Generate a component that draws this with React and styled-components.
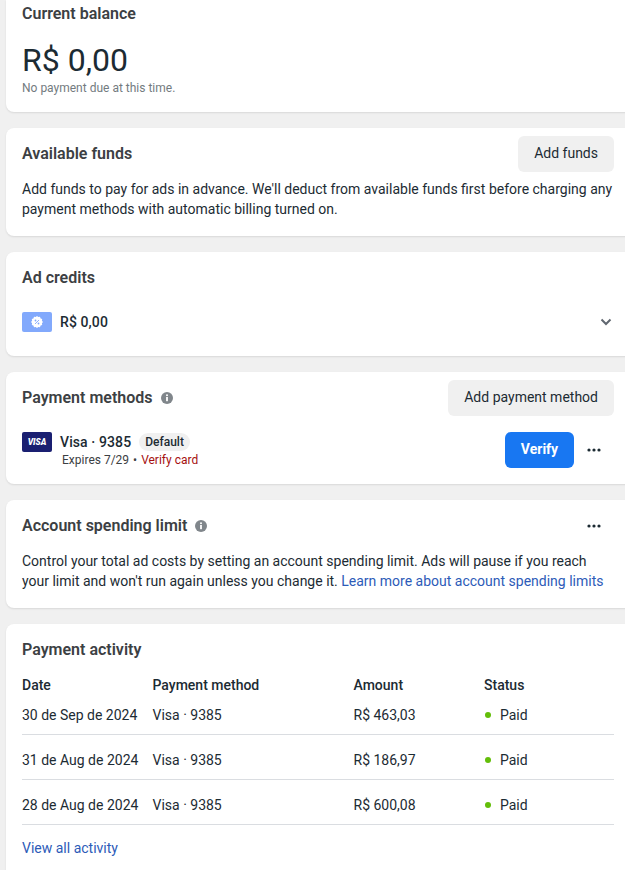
import React from "react";
import styled, { createGlobalStyle } from "styled-components";

const GlobalStyle = createGlobalStyle`
  html, body {
    margin: 0;
    padding: 0;
    background: #f0f0f0;
    overflow: hidden;
  }
  body {
    font-family: Roboto, "Liberation Sans", sans-serif;
    color: #1c2b33;
  }
`;

const Page = styled.div`
  width: 625px;
  height: 870px;
  overflow: hidden;
  padding-left: 6px;
  box-sizing: border-box;
  display: flex;
  flex-direction: column;
  gap: 16px;
`;

const Card = styled.section`
  background: #fff;
  border-radius: ${(p) => (p.$flushTop ? "0 0 8px 8px" : "8px")};
  box-shadow: 0 1px 2px rgba(0, 0, 0, 0.1);
  box-sizing: border-box;
  flex: none;
  height: ${(p) => p.$height}px;
  margin-right: -12px;
  padding: ${(p) => p.$pad || "8px"} 23px 0 16px;
`;

const HeaderRow = styled.div`
  display: flex;
  align-items: center;
  justify-content: space-between;
  min-height: 36px;
`;

const TitleGroup = styled.div`
  display: flex;
  align-items: center;
  gap: 8px;
`;

const Title = styled.h2`
  margin: 0;
  font-size: 16px;
  line-height: 20px;
  font-weight: 600;
  color: #3c4043;
`;

const GreyButton = styled.button`
  height: 36px;
  padding: 0 16px 2px;
  border: 0;
  border-radius: 6px;
  background: #f0f0f0;
  color: #1c2b33;
  font: 400 14px/20px Roboto, sans-serif;
`;

const BlueButton = styled.button`
  height: 36px;
  width: 69px;
  padding: 0 0 2px;
  border: 0;
  border-radius: 6px;
  background: #1877f2;
  color: #fff;
  font: 700 14px/20px Roboto, sans-serif;
`;

const BigAmount = styled.div`
  margin-top: 17px;
  font-size: 32px;
  line-height: 38px;
  font-weight: 400;
  color: #1c2b33;
`;

const Hint = styled.div`
  margin-top: 1px;
  font-size: 12px;
  line-height: 16px;
  color: #737b80;
`;

const Body = styled.p`
  margin: 7px 0 0;
  font-size: 14px;
  line-height: 20px;
  color: #1c2b33;
`;

const Link = styled.a`
  color: #2d5bb8;
  text-decoration: none;
  font-size: 14px;
  line-height: 20px;
`;

const CreditRow = styled.div`
  display: flex;
  align-items: center;
  gap: 8px;
  margin-top: 24px;
`;

const CreditBadge = styled.div`
  width: 30px;
  height: 20px;
  border-radius: 2px;
  background: #82a9fc;
  display: flex;
  align-items: center;
  justify-content: center;
`;

const Strong = styled.span`
  font-size: 14px;
  line-height: 20px;
  font-weight: 500;
  color: #1c2b33;
  letter-spacing: 0.1px;
`;

const Chevron = styled.div`
  margin-left: auto;
  margin-right: 2px;
  display: flex;
`;

const MethodRow = styled.div`
  display: flex;
  align-items: center;
  margin-top: 16px;
`;

const VisaBadge = styled.div`
  width: 30px;
  height: 20px;
  border-radius: 2px;
  background: #1a1f71;
  color: #fff;
  font: italic 900 8.5px/20px Roboto, sans-serif;
  text-align: center;
  align-self: flex-start;
  margin-right: 8px;
`;

const MethodText = styled.div`
  display: flex;
  flex-direction: column;
`;

const MethodTop = styled.div`
  display: flex;
  align-items: center;
  gap: 8px;
  height: 18px;
`;

const DefaultPill = styled.span`
  padding: 0 6px;
  height: 18px;
  border-radius: 9px;
  background: #f0f0f0;
  font-size: 12px;
  line-height: 18px;
  font-weight: 500;
  color: #1c2b33;
`;

const MethodSub = styled.div`
  margin: 1px 0 0 2px;
  font-size: 12px;
  line-height: 16px;
  color: #3c4043;
`;

const Bullet = styled.span`
  margin: 0 1px;
`;

const Danger = styled.span`
  color: #a50f0f;
`;

const RowActions = styled.div`
  margin-left: auto;
  display: flex;
  align-items: center;
  gap: 13px;
`;

const Dots = styled.svg`
  width: 14px;
  height: 4px;
  display: block;
  margin-right: 13px;
`;

const Table = styled.div`
  margin-top: 15px;
`;

const TableBody = styled.div`
  display: flex;
  flex-direction: column;
  gap: 5px;
`;

const TableRow = styled.div`
  display: grid;
  grid-template-columns: 130.5px 201px 130.5px 1fr;
  align-items: center;
  height: ${(p) => (p.$head ? 20 : 40)}px;
  box-sizing: border-box;
  border-bottom: ${(p) => (p.$head ? "0" : "1px solid #dadde1")};
  font-size: 14px;
  font-weight: ${(p) => (p.$head ? 500 : 400)};
  color: #1c2b33;
`;

const Status = styled.div`
  display: flex;
  align-items: center;
  gap: 9px;
`;

const Dot = styled.span`
  width: 6px;
  height: 6px;
  margin-left: 1px;
  border-radius: 50%;
  background: #63be09;
`;

const Footer = styled.div`
  margin-top: 13px;
`;

const InfoIcon = () => (
  <svg width="12" height="12" viewBox="0 0 12 12" aria-hidden="true">
    <circle cx="6" cy="6" r="6" fill="#80868b" />
    <rect x="5.1" y="5" width="1.8" height="4.2" fill="#fff" />
    <circle cx="6" cy="3.3" r="1" fill="#fff" />
  </svg>
);

const MoreDots = () => (
  <Dots viewBox="0 0 14 4" aria-hidden="true">
    <circle cx="2" cy="2" r="1.6" fill="#1c2b33" />
    <circle cx="7" cy="2" r="1.6" fill="#1c2b33" />
    <circle cx="12" cy="2" r="1.6" fill="#1c2b33" />
  </Dots>
);

const payments = [
  { date: "30 de Sep de 2024", amount: "R$ 463,03" },
  { date: "31 de Aug de 2024", amount: "R$ 186,97" },
  { date: "28 de Aug de 2024", amount: "R$ 600,08" },
];

export default function App() {
  return (
    <>
      <GlobalStyle />
      <Page>
        <Card $height={112} $flushTop $pad="4px">
          <Title>Current balance</Title>
          <BigAmount>R$ 0,00</BigAmount>
          <Hint>No payment due at this time.</Hint>
        </Card>

        <Card $height={108}>
          <HeaderRow>
            <Title>Available funds</Title>
            <GreyButton>Add funds</GreyButton>
          </HeaderRow>
          <Body>
            Add funds to pay for ads in advance. We'll deduct from available funds first before charging any payment
            methods with automatic billing turned on.
          </Body>
        </Card>

        <Card $height={104} $pad="16px">
          <Title>Ad credits</Title>
          <CreditRow>
            <CreditBadge>
              <svg width="12" height="12" viewBox="0 0 12 12" aria-hidden="true">
                <path
                  fill="#fff"
                  d="M6 0l1.3 1.1 1.7-.3.6 1.6 1.6.6-.3 1.7L12 6l-1.1 1.3.3 1.7-1.6.6-.6 1.6-1.7-.3L6 12l-1.3-1.1-1.7.3-.6-1.6-1.6-.6.3-1.7L0 6l1.1-1.3-.3-1.7 1.6-.6.6-1.6 1.7.3z"
                />
                <circle cx="4.5" cy="4.5" r="0.9" fill="#82a9fc" />
                <circle cx="7.5" cy="7.5" r="0.9" fill="#82a9fc" />
                <path d="M8 4L4 8" stroke="#82a9fc" strokeWidth="0.9" />
              </svg>
            </CreditBadge>
            <Strong>R$ 0,00</Strong>
            <Chevron>
              <svg width="12" height="8" viewBox="0 0 12 8" aria-hidden="true">
                <path d="M1.5 1.5L6 6l4.5-4.5" fill="none" stroke="#606770" strokeWidth="2" />
              </svg>
            </Chevron>
          </CreditRow>
        </Card>

        <Card $height={112}>
          <HeaderRow>
            <TitleGroup>
              <Title>Payment methods</Title>
              <InfoIcon />
            </TitleGroup>
            <GreyButton>Add payment method</GreyButton>
          </HeaderRow>
          <MethodRow>
            <VisaBadge>VISA</VisaBadge>
            <MethodText>
              <MethodTop>
                <Strong>Visa · 9385</Strong>
                <DefaultPill>Default</DefaultPill>
              </MethodTop>
              <MethodSub>
                Expires 7/29 <Bullet>•</Bullet> <Danger>Verify card</Danger>
              </MethodSub>
            </MethodText>
            <RowActions>
              <BlueButton>Verify</BlueButton>
              <MoreDots />
            </RowActions>
          </MethodRow>
        </Card>

        <Card $height={108}>
          <HeaderRow>
            <TitleGroup>
              <Title>Account spending limit</Title>
              <InfoIcon />
            </TitleGroup>
            <MoreDots />
          </HeaderRow>
          <Body>
            Control your total ad costs by setting an account spending limit. Ads will pause if you reach your limit and
            won't run again unless you change it. <Link>Learn more about account spending limits</Link>
          </Body>
        </Card>

        <Card $height={260} $pad="16px">
          <Title>Payment activity</Title>
          <Table>
            <TableRow $head>
              <div>Date</div>
              <div>Payment method</div>
              <div>Amount</div>
              <div>Status</div>
            </TableRow>
            <TableBody>
              {payments.map((payment) => (
                <TableRow key={payment.date}>
                  <div>{payment.date}</div>
                  <div>Visa · 9385</div>
                  <div>{payment.amount}</div>
                  <Status>
                    <Dot />
                    Paid
                  </Status>
                </TableRow>
              ))}
            </TableBody>
          </Table>
          <Footer>
            <Link>View all activity</Link>
          </Footer>
        </Card>
      </Page>
    </>
  );
}
